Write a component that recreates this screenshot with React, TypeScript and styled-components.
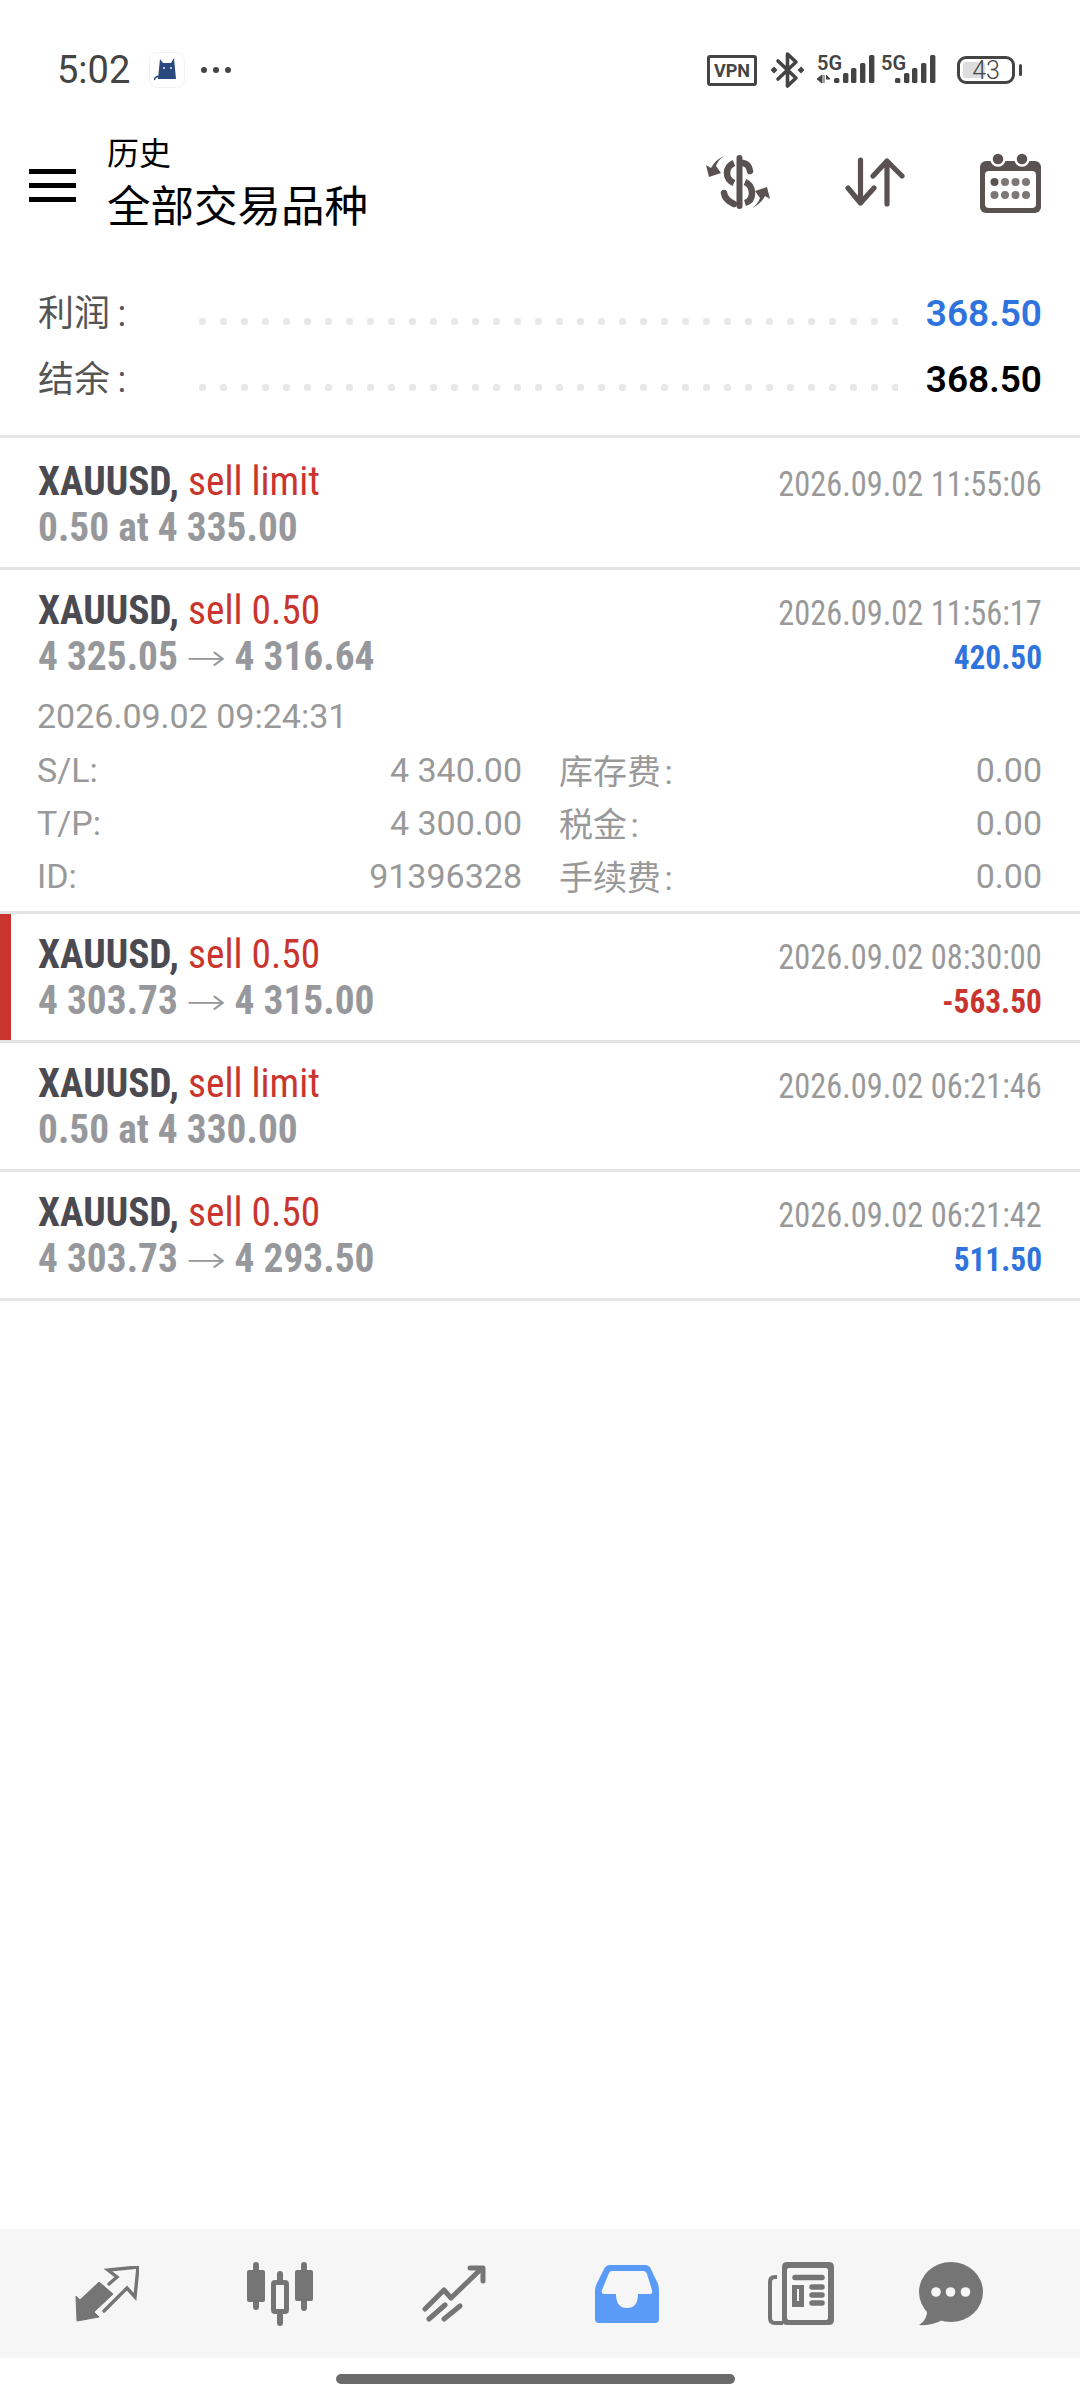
import React from 'react';
import styled, { createGlobalStyle } from 'styled-components';

const GlobalStyle = createGlobalStyle`
  html, body { margin: 0; padding: 0; background: #fff; }
  * { box-sizing: border-box; }
`;

const CJK = `Roboto, "Noto Sans CJK SC", sans-serif`;
const NARROW = `"Roboto Condensed", Roboto, sans-serif`;

const Page = styled.div`
  width: 1080px;
  height: 2400px;
  display: flex;
  flex-direction: column;
  background: #fff;
  font-family: ${CJK};
  overflow: hidden;
`;

const StatusBar = styled.div`
  height: 122px;
  padding: 27px 65px 9px 57px;
  display: flex;
  align-items: center;
  color: #444;
`;

const Clock = styled.span`
  font-size: 38px;
  margin-right: 19px;
`;

const NotifyIcon = styled.svg`
  width: 36px;
  height: 36px;
  margin-right: 15px;
`;

const StatusRight = styled.div`
  margin-left: auto;
  display: flex;
  align-items: center;
`;

const VpnBadge = styled.span`
  width: 50px;
  height: 31px;
  border: 3px solid #444;
  border-radius: 3px;
  display: flex;
  align-items: center;
  justify-content: center;
  font-size: 18px;
  font-weight: 700;
  margin-right: 14px;
`;

const Battery = styled.div`
  position: relative;
  width: 58px;
  height: 28px;
  margin-left: 15px;
  border: 3px solid #444;
  border-radius: 9px;
  display: flex;
  align-items: center;
  justify-content: center;
  font-size: 25px;
  font-weight: 300;

  &::before {
    content: '';
    position: absolute;
    left: 3px;
    top: 3px;
    bottom: 3px;
    width: 22px;
    border-radius: 3px;
    background: #ddd;
  }

  &::after {
    content: '';
    position: absolute;
    right: -10px;
    top: 5px;
    width: 3px;
    height: 12px;
    border-radius: 2px;
    background: #444;
  }
`;

const BatteryValue = styled.span`
  position: relative;
`;

const Toolbar = styled.div`
  height: 120px;
  padding: 7px 39px 0 29px;
  display: flex;
  align-items: center;
`;

const Burger = styled.div`
  width: 47px;
  height: 33px;
  margin-right: 31px;
  display: flex;
  flex-direction: column;
  justify-content: space-between;

  span {
    display: block;
    height: 5px;
    background: #000;
  }
`;

const TitleBlock = styled.div`
  display: flex;
  flex-direction: column;
  color: #000;
`;

const SubTitle = styled.span`
  font-size: 32px;
  line-height: 44px;
`;

const MainTitle = styled.span`
  font-size: 43.5px;
  line-height: 64px;
`;

const Actions = styled.div`
  margin-left: auto;
  margin-top: -7px;
  display: flex;
  align-items: center;
  gap: 75px;
`;

const Summary = styled.div`
  padding: 37px 38px 24px;
  border-bottom: 3px solid #e4e4e4;
`;

const SummaryRow = styled.div`
  height: 66px;
  display: flex;
  align-items: center;
`;

const SummaryLabel = styled.span`
  width: 161px;
  margin-top: -5px;
  font-size: 36px;
  color: #555;
  white-space: pre;
`;

const Dots = styled.div`
  flex: 1;
  height: 7px;
  margin: 18px 28px 0 0;
  background-image: radial-gradient(circle at 3.5px 3.5px, #e8e8e8 3.5px, transparent 4px);
  background-size: 21px 7px;
  background-repeat: repeat-x;
`;

const SummaryValue = styled.span<{ $color: string }>`
  margin-top: 2px;
  font-size: 37px;
  font-weight: 600;
  color: ${(p) => p.$color};
`;

const DealRow = styled.div<{ $flagged?: boolean; $first?: boolean; $expanded?: boolean }>`
  position: relative;
  padding: ${(p) => (p.$first ? 20 : 17)}px 38px ${(p) => (p.$expanded ? 9 : 17)}px;
  border-bottom: 3px solid #e4e4e4;

  ${(p) =>
    p.$flagged &&
    `&::before {
      content: '';
      position: absolute;
      left: 0;
      top: 0;
      bottom: 0;
      width: 11px;
      background: #c9352e;
    }`}
`;

const Line = styled.div`
  height: 46px;
  display: flex;
  justify-content: space-between;
  align-items: center;
  white-space: nowrap;
`;

const Condensed = styled.span<{ $right?: boolean }>`
  display: inline-block;
  font-family: ${NARROW};
  font-stretch: 75%;
  line-height: 44px;
  transform-origin: ${(p) => (p.$right ? 'right' : 'left')} center;
`;

const Symbol = styled(Condensed)`
  font-size: 41px;
  font-weight: 700;
  color: #4a4a50;
  transform: scaleX(0.96);
`;

const Side = styled.span`
  font-weight: 400;
  color: #c9352e;
`;

const Prices = styled(Condensed)`
  font-size: 41px;
  font-weight: 700;
  color: #97989c;
  transform: scaleX(0.96);
`;

const Arrow = styled.span`
  display: inline-block;
  margin: 0 5px;
  font-family: "DejaVu Sans", sans-serif;
  font-size: 36px;
  font-weight: 200;
  line-height: 30px;
  transform: scaleX(1.4);
`;

const DealTime = styled(Condensed)`
  margin-top: 7px;
  font-size: 35px;
  color: #999;
  transform: scaleX(0.925);
`;

const Profit = styled(Condensed)<{ $color: string }>`
  margin-top: 4px;
  font-size: 33px;
  font-weight: 700;
  color: ${(p) => p.$color};
  transform: scaleX(0.95);
`;

const Details = styled.div`
  margin: 11px 0 0 -1px;
  font-size: 34px;
  color: #999;
`;

const OpenTime = styled.div`
  height: 53px;
  line-height: 53px;
`;

const DetailGrid = styled.div`
  display: grid;
  grid-template-columns: 485px 1fr;
  column-gap: 37px;
`;

const DetailCell = styled.div`
  height: 53px;
  display: flex;
  justify-content: space-between;
  align-items: center;
  white-space: pre;
`;

const Spacer = styled.div`
  flex: 1;
`;

const BottomNav = styled.nav`
  height: 129px;
  padding-left: 20px;
  display: flex;
  align-items: center;
  background: #f6f6f6;
`;

const NavItem = styled.div<{ $width: number }>`
  width: ${(p) => p.$width}px;
  display: flex;
  justify-content: center;
`;

const HomeArea = styled.div`
  height: 42px;
  padding: 16px 9px 0 0;
  display: flex;
  justify-content: center;
`;

const HomeBar = styled.div`
  width: 399px;
  height: 10px;
  border-radius: 5px;
  background: #6b6b6b;
`;

const deals = [
  { side: 'sell limit', from: '0.50 at 4 335.00', time: '2026.09.02 11:55:06', first: true },
  {
    side: 'sell 0.50',
    from: '4 325.05',
    to: '4 316.64',
    time: '2026.09.02 11:56:17',
    profit: '420.50',
    color: '#2f74de',
    open: '2026.09.02 09:24:31',
  },
  {
    side: 'sell 0.50',
    from: '4 303.73',
    to: '4 315.00',
    time: '2026.09.02 08:30:00',
    profit: '-563.50',
    color: '#c9352e',
    flagged: true,
  },
  { side: 'sell limit', from: '0.50 at 4 330.00', time: '2026.09.02 06:21:46' },
  {
    side: 'sell 0.50',
    from: '4 303.73',
    to: '4 293.50',
    time: '2026.09.02 06:21:42',
    profit: '511.50',
    color: '#2f74de',
  },
];

const detailRows = [
  ['S/L:', '4 340.00', '库存费\u200a:', '0.00'],
  ['T/P:', '4 300.00', '税金\u200a:', '0.00'],
  ['ID:', '91396328', '手续费\u200a:', '0.00'],
];

const ICON = '#5a5250';
const NAV = '#757575';

const CatIcon = () => (
  <NotifyIcon viewBox="0 0 36 36">
    <rect x="0.5" y="0.5" width="35" height="35" rx="8" fill="#fff" stroke="#f2f2f2" />
    <path d="M11 7 L14 11 H22 L25 6 L27 27 H9 Z" fill="#2a4a7f" />
    <path d="M10 24 Q4 26 6 28" fill="none" stroke="#2a4a7f" strokeWidth="1.5" />
    <circle cx="15" cy="16" r="1" fill="#dfe6f2" />
    <circle cx="22" cy="16" r="1" fill="#dfe6f2" />
  </NotifyIcon>
);

const MoreDots = () => (
  <svg width="32" height="8" viewBox="0 0 32 8">
    <circle cx="4" cy="4" r="3" fill="#444" />
    <circle cx="16" cy="4" r="3" fill="#444" />
    <circle cx="28" cy="4" r="3" fill="#444" />
  </svg>
);

const BluetoothIcon = () => (
  <svg width="33" height="38" viewBox="0 0 33 38" style={{ marginRight: 13 }}>
    <path
      d="M7 10 L25 27 L16.5 35 V3 L25 11 L7 28"
      fill="none"
      stroke="#444"
      strokeWidth="3.6"
      strokeLinejoin="round"
      strokeLinecap="round"
    />
    <path d="M3 15.5 L6.5 19 L3 22.5 L-0.5 19 Z M30 15.5 L33.5 19 L30 22.5 L26.5 19 Z" fill="#444" />
  </svg>
);

const SignalIcon = ({ arrows }: { arrows?: boolean }) => (
  <svg width={arrows ? 58 : 55} height="40" viewBox={arrows ? '0 -5 58 40' : '3 -5 55 40'} style={{ marginRight: 6 }}>
    <text x={arrows ? 0 : 3} y="15" fontSize="20" fontWeight="600" fontFamily="Roboto, sans-serif" fill="#444">
      5G
    </text>
    {[5, 10, 15, 20, 28].map((h, i) => (
      <rect key={i} x={[17, 26, 34, 43, 52][i]} y={28 - h} width="5.4" height={h} rx="1.5" fill="#444" />
    ))}
    {arrows && (
      <path d="M5 20 V28 L0 24 Z M7 20 V28 M9 20 L13 24 H9" fill="#444" stroke="#444" strokeWidth="1" />
    )}
  </svg>
);

const DollarIcon = () => (
  <svg width="64" height="54" viewBox="0 0 64 54">
    <rect x="30.5" y="0" width="6" height="54" rx="3" fill={ICON} />
    <g fill="none" stroke={ICON} strokeWidth="6.5">
      <path d="M37 8 Q43 9 44 16" strokeLinecap="round" />
      <path d="M28 8 Q21 11 21 18 Q21 25 28 28" />
      <path d="M39 27 Q46 30 46 38 Q46 46 39 48" />
      <path d="M18 38 Q19 45 28 49" strokeLinecap="round" />
    </g>
    <path d="M18 1 Q12 5 10 11 L15 18 L3 22 L0 10 L5 13 Q9 5 18 1 Z" fill={ICON} />
    <path d="M18 1 Q12 5 10 11 L15 18 L3 22 L0 10 L5 13 Q9 5 18 1 Z" fill={ICON} transform="rotate(180 32 27)" />
  </svg>
);

const SwapIcon = () => (
  <svg width="60" height="50" viewBox="0 0 60 50">
    <g fill="none" stroke={ICON} strokeWidth="5.2" strokeLinecap="round" strokeLinejoin="round">
      <path d="M15.5 3 V46 M3 31 L15.5 46 L29 31" />
      <path d="M42 47 V4 M28 19 L42 4 L57 19" />
    </g>
  </svg>
);

const CalendarIcon = () => (
  <svg width="61" height="61" viewBox="0 0 61 61">
    <rect x="0" y="9" width="61" height="52" rx="6" fill={ICON} />
    <rect x="5" y="19" width="51" height="37" rx="4" fill="#fff" />
    <circle cx="18" cy="7" r="6.5" fill={ICON} stroke="#fff" strokeWidth="2.5" />
    <circle cx="42" cy="7" r="6.5" fill={ICON} stroke="#fff" strokeWidth="2.5" />
    {[30, 43].map((y) =>
      [14.5, 25, 35.5, 46].map((x) => (
        <circle key={`${x}-${y}`} cx={x} cy={y} r="4" fill={x === 14.5 && y === 30 ? ICON : '#7d7876'} />
      )),
    )}
  </svg>
);

const TradeIcon = () => (
  <svg width="64" height="56" viewBox="0 0 64 56">
    <path d="M1 30 L5 34 L24 16 L38 28 L19 46 L24 51 L2 55 Z" fill={NAV} strokeLinejoin="round" stroke={NAV} strokeWidth="1" />
    <path
      d="M29 45 L52 22 L60 31 L63 1 L33 4 L42 11 L34 18"
      fill="none"
      stroke={NAV}
      strokeWidth="3.4"
      strokeLinecap="round"
    />
  </svg>
);

const CandlesIcon = () => (
  <svg width="66" height="64" viewBox="0 0 66 64">
    <g stroke={NAV} strokeWidth="6" strokeLinecap="round">
      <path d="M9 3 V45 M33 12 V61 M57 3 V46" />
    </g>
    <rect x="0" y="8" width="18" height="32" rx="2" fill={NAV} />
    <rect x="48" y="8" width="18" height="31" rx="2" fill={NAV} />
    <rect x="26.5" y="20.5" width="13" height="29" rx="1.5" fill="#f6f6f6" stroke={NAV} strokeWidth="5" />
  </svg>
);

const ChartIcon = () => (
  <svg width="64" height="57" viewBox="0 0 64 57">
    <g fill="none" stroke={NAV} strokeWidth="5" strokeLinecap="round" strokeLinejoin="round">
      <path d="M3 44 L22 25 L29 33 L59 4" />
      <path d="M48 3 H61 V16" />
      <path d="M7 54 L23 40 M22 54 L38 41" />
    </g>
  </svg>
);

const InboxIcon = () => (
  <svg width="64" height="58" viewBox="0 0 64 58">
    <path
      fillRule="evenodd"
      fill="#5b9bf8"
      d="M15 0 H50 Q54 0 56 4 L63 19 Q64 22 64 26 V54 Q64 58 60 58 H4 Q0 58 0 54 V26 Q0 22 2 18 L9 4 Q11 0 15 0 Z
         M17 6 Q15 6 14 8 L7 25 Q6 29 9 29 H21 Q21 43 32 43 Q43 43 43 29 H55 Q58 29 57 25 L52 9 Q51 6 48 6 Z"
    />
  </svg>
);

const NewsIcon = () => (
  <svg width="66" height="64" viewBox="0 0 66 64">
    <path
      fillRule="evenodd"
      fill={NAV}
      d="M19 0 H61 Q66 0 66 5 V58 Q66 63 61 63 H19 Q14 63 14 58 V5 Q14 0 19 0 Z
         M21 6 Q19 6 19 8 V56 Q19 58 21 58 H58 Q60 58 60 56 V8 Q60 6 58 6 Z"
    />
    <path d="M9 15 H7 Q2 15 2 20 V56 Q2 61 7 61 H15" fill="none" stroke={NAV} strokeWidth="4" />
    <g stroke={NAV} strokeWidth="5.5" strokeLinecap="round">
      <path d="M27 15.5 H54 M44 25 H54 M44 33 H54 M44 41 H54" />
    </g>
    <path fillRule="evenodd" fill={NAV} d="M24 23 H36 V45 H24 Z M29 27 V39 H31 V27 Z" />
  </svg>
);

const ChatIcon = () => (
  <svg width="64" height="64" viewBox="0 0 64 64">
    <ellipse cx="32" cy="30" rx="32" ry="30" fill={NAV} />
    <path d="M8 46 Q9 58 0 63 Q14 64 25 57 Z" fill={NAV} />
    <circle cx="17" cy="30" r="4.8" fill="#f6f6f6" />
    <circle cx="31.5" cy="30" r="4.8" fill="#f6f6f6" />
    <circle cx="46.5" cy="30" r="4.8" fill="#f6f6f6" />
  </svg>
);

const App: React.FC = () => {
  return (
    <Page>
      <GlobalStyle />
      <StatusBar>
        <Clock>5:02</Clock>
        <CatIcon />
        <MoreDots />
        <StatusRight>
          <VpnBadge>VPN</VpnBadge>
          <BluetoothIcon />
          <SignalIcon arrows />
          <SignalIcon />
          <Battery>
            <BatteryValue>43</BatteryValue>
          </Battery>
        </StatusRight>
      </StatusBar>

      <Toolbar>
        <Burger>
          <span />
          <span />
          <span />
        </Burger>
        <TitleBlock>
          <SubTitle>历史</SubTitle>
          <MainTitle>全部交易品种</MainTitle>
        </TitleBlock>
        <Actions>
          <DollarIcon />
          <SwapIcon />
          <CalendarIcon />
        </Actions>
      </Toolbar>

      <Summary>
        <SummaryRow>
          <SummaryLabel>利润{'\u2009'}:</SummaryLabel>
          <Dots />
          <SummaryValue $color="#2f74de">368.50</SummaryValue>
        </SummaryRow>
        <SummaryRow>
          <SummaryLabel>结余{'\u2009'}:</SummaryLabel>
          <Dots />
          <SummaryValue $color="#000">368.50</SummaryValue>
        </SummaryRow>
      </Summary>

      {deals.map((deal) => (
        <DealRow key={deal.time} $flagged={deal.flagged} $first={deal.first} $expanded={!!deal.open}>
          <Line>
            <Symbol>
              XAUUSD, <Side>{deal.side}</Side>
            </Symbol>
            <DealTime $right>{deal.time}</DealTime>
          </Line>
          <Line>
            <Prices>
              {deal.from}
              {deal.to && (
                <>
                  {' '}
                  <Arrow>→</Arrow> {deal.to}
                </>
              )}
            </Prices>
            {deal.profit && (
              <Profit $right $color={deal.color ?? '#000'}>
                {deal.profit}
              </Profit>
            )}
          </Line>
          {deal.open && (
            <Details>
              <OpenTime>{deal.open}</OpenTime>
              {detailRows.map((row) => (
                <DetailGrid key={row[0]}>
                  <DetailCell>
                    <span>{row[0]}</span>
                    <span>{row[1]}</span>
                  </DetailCell>
                  <DetailCell>
                    <span>{row[2]}</span>
                    <span>{row[3]}</span>
                  </DetailCell>
                </DetailGrid>
              ))}
            </Details>
          )}
        </DealRow>
      ))}

      <Spacer />

      <BottomNav>
        <NavItem $width={173.5}><TradeIcon /></NavItem>
        <NavItem $width={173.5}><CandlesIcon /></NavItem>
        <NavItem $width={173.5}><ChartIcon /></NavItem>
        <NavItem $width={173.5}><InboxIcon /></NavItem>
        <NavItem $width={173.5}><NewsIcon /></NavItem>
        <NavItem $width={126}><ChatIcon /></NavItem>
      </BottomNav>
      <HomeArea>
        <HomeBar />
      </HomeArea>
    </Page>
  );
};

export default App;
